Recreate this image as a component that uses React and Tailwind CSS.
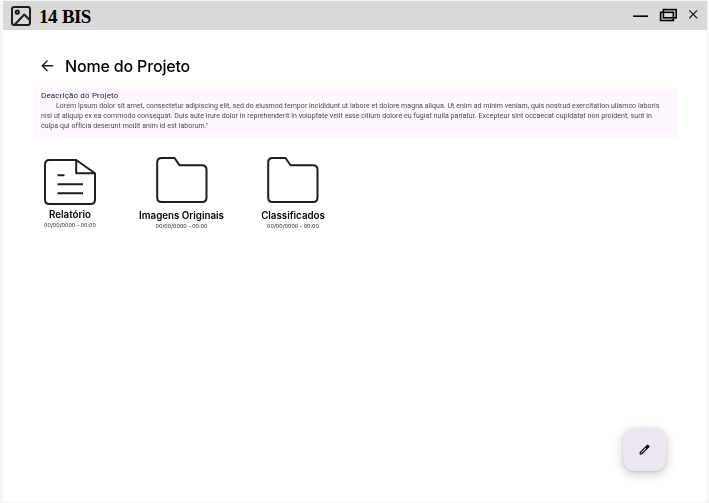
import React from "react";

const stroke = { fill: "none", stroke: "#1e1e1e", strokeWidth: 2, strokeLinejoin: "round", strokeLinecap: "round" };

function TitleBar() {
  return (
    <header className="flex h-[29px] shrink-0 items-center bg-[#d9d9d9] pl-[7px]">
      <svg className="h-[22px] w-[22px]" viewBox="0 0 22 22" {...stroke}>
        <rect x="2" y="2" width="18" height="18" rx="2.2" />
        <circle cx="7.3" cy="7.2" r="1.6" />
        <path d="M4.5 20L14.2 9.5L20 15.3" />
      </svg>
      <h1 className="ml-[7px] mt-[2px] whitespace-nowrap font-['Liberation_Serif',serif] text-[19px] font-bold leading-none tracking-[-0.6px] [word-spacing:1px] text-black">14 BIS</h1>
      <svg className="ml-auto mr-[4px] h-[20px] w-[72px]" viewBox="0 0 72 20" fill="none" stroke="#000">
        <path d="M2 10.2H17" strokeWidth="1.6" />
        <rect x="32.4" y="3.6" width="12.8" height="8.2" strokeWidth="1.6" />
        <rect x="29.6" y="6.3" width="12.8" height="8.2" strokeWidth="1.6" />
        <path d="M58.3 4.4L66.1 12.2M66.1 4.4L58.3 12.2" stroke="#1e1e1e" strokeWidth="1.3" />
      </svg>
    </header>
  );
}

function ReportIcon() {
  return (
    <svg className="h-[48px] w-[54px]" viewBox="0 0 54 48" {...stroke}>
      <path d="M33.2 2H6.5Q2 2 2 6.5V41.5Q2 46 6.5 46H47.5Q52 46 52 41.5V15.3L33.2 2V15.3H52" />
      <path d="M14.5 17.3H21.5M14.5 26.2H40M14.5 35.2H40" strokeLinecap="butt" />
    </svg>
  );
}

function FolderIcon() {
  return (
    <svg className="h-[48px] w-[54px]" viewBox="0 0 54 48" {...stroke}>
      <path d="M6.5 2H19.5L24.5 9.3H47Q51.5 9.3 51.5 13.8V41.5Q51.5 46 47 46H6.5Q2.2 46 2.2 41.5V6.5Q2.2 2 6.5 2Z" />
    </svg>
  );
}

function Item({ icon, label, className }) {
  return (
    <div className={"flex flex-col items-center whitespace-nowrap font-['Inter',sans-serif] text-black " + className}>
      {icon}
      <span className="text-[9.75px] font-semibold leading-[13px]">{label}</span>
      <span className="mt-[1px] text-[5.4px] leading-[7px] text-[#111]">00/00/0000 - 00:00</span>
    </div>
  );
}

export default function App() {
  return (
    <div className="h-[503px] w-[709px] overflow-hidden bg-[#f5f5f5] pb-[1px] pl-[3px] pr-[2px] pt-[1px]">
      <div className="flex h-full flex-col bg-white">
        <TitleBar />
        <main className="flex flex-1 flex-col pl-[30px] pr-[30px] will-change-transform">
          <div className="mt-[24px] flex h-[24px] items-center pl-[7px]">
            <svg className="h-[14px] w-[14px]" viewBox="0 0 14 14" fill="none" stroke="#1d1b20" strokeWidth="1.4">
              <path d="M13.2 6.7H2.5M7.5 1.5L2.3 6.7L7.5 11.9" />
            </svg>
            <h2 className="ml-[11px] whitespace-nowrap font-['Inter',sans-serif] text-[16px] font-medium leading-none tracking-[-0.17px] text-black">Nome do Projeto</h2>
          </div>
          <section className="mt-[10px] h-[50px] w-[644px] whitespace-nowrap bg-[#fef7ff] pl-[8px] pt-[3px] font-['Roboto',sans-serif] text-[#49454f]">
            <h3 className="text-[8px] leading-[10px] tracking-[0.16px] text-[#1d1b20]">Deacrição do Projeto</h3>
            <p className="text-[7px] leading-[10px]">
              <span className="block pl-[15px] tracking-[0.049px]">Lorem ipsum dolor sit amet, consectetur adipiscing elit, sed do eiusmod tempor incididunt ut labore et dolore magna aliqua. Ut enim ad minim veniam, quis nostrud exercitation ullamco laboris</span>
              <span className="block tracking-[0.054px]">nisi ut aliquip ex ea commodo consequat. Duis aute irure dolor in reprehenderit in voluptate velit esse cillum dolore eu fugiat nulla pariatur. Excepteur sint occaecat cupidatat non proident, sunt in</span>
              <span className="block tracking-[0.04px]">culpa qui officia deserunt mollit anim id est laborum."</span>
            </p>
          </section>
          <div className="mt-[18px] flex items-start">
            <Item className="mt-[2px] w-[74px] [&>svg]:mb-[2px]" icon={<ReportIcon />} label="Relatório" />
            <Item className="ml-[26px] w-[97px] [&>svg]:mb-[5px]" icon={<FolderIcon />} label="Imagens Originais" />
            <Item className="ml-[23px] w-[80px] [&>svg]:mb-[5px]" icon={<FolderIcon />} label="Classificados" />
          </div>
          <button className="mb-[31px] ml-auto mr-[11px] mt-auto flex h-[43px] w-[43px] items-center justify-center rounded-[12px] bg-[#ece6f0] shadow-[0_3px_8px_2px_rgba(0,0,0,0.15),0_1px_3px_rgba(0,0,0,0.12)]">
            <svg className="h-[13px] w-[13px]" viewBox="0 0 24 24" fill="#000">
              <path fillRule="evenodd" d="M3 17V21H7.2L21 7.2Q21.7 6.4 21 5.6L18.4 3Q17.6 2.3 16.8 3ZM5 19V17.8L14 8.8L15.2 10L6.2 19Z" />
            </svg>
          </button>
        </main>
      </div>
    </div>
  );
}
